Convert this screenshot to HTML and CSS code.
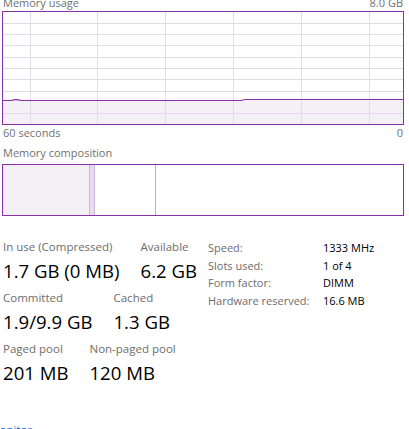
FILE: index.html
```html
<!DOCTYPE html>
<html>
<head>
<meta charset="utf-8">
<link rel="stylesheet" href="styles.css">
</head>
<body>
<div class="page">
  <div class="row-labels top">
    <span>Memory usage</span>
    <span>8.0 GB</span>
  </div>
  <div class="graph">
    <svg width="400" height="112" viewBox="0 0 400 112">
      <g stroke="#e4dbe8" stroke-width="1">
        <line x1="0" y1="11.5" x2="400" y2="11.5"/>
        <line x1="0" y1="22.5" x2="400" y2="22.5"/>
        <line x1="0" y1="33.5" x2="400" y2="33.5"/>
        <line x1="0" y1="45.5" x2="400" y2="45.5"/>
        <line x1="0" y1="56.5" x2="400" y2="56.5"/>
        <line x1="0" y1="67.5" x2="400" y2="67.5"/>
        <line x1="0" y1="79.5" x2="400" y2="79.5"/>
        <line x1="27.5" y1="0" x2="27.5" y2="112"/>
        <line x1="94.5" y1="0" x2="94.5" y2="112"/>
        <line x1="162.5" y1="0" x2="162.5" y2="112"/>
        <line x1="230.5" y1="0" x2="230.5" y2="112"/>
        <line x1="298.5" y1="0" x2="298.5" y2="112"/>
        <line x1="366.5" y1="0" x2="366.5" y2="112"/>
      </g>
      <path d="M0 88.5 L8 88.5 Q13 86.8 18 88.5 L238 88.5 Q241 87.5 244 87.5 L400 87.5 L400 112 L0 112 Z" fill="#f4f1f6"/>
      <g stroke="#e9d3ee" stroke-width="1">
        <line x1="0" y1="101.5" x2="400" y2="101.5"/>
      </g>
      <g stroke="#e4dbe8" stroke-width="1">
        <line x1="27.5" y1="89" x2="27.5" y2="112"/>
        <line x1="94.5" y1="89" x2="94.5" y2="112"/>
        <line x1="162.5" y1="89" x2="162.5" y2="112"/>
        <line x1="230.5" y1="89" x2="230.5" y2="112"/>
        <line x1="298.5" y1="89" x2="298.5" y2="112"/>
        <line x1="366.5" y1="89" x2="366.5" y2="112"/>
      </g>
      <path d="M0 88.5 L8 88.5 Q13 86.8 18 88.5 L238 88.5 Q241 87.5 244 87.5 L400 87.5" fill="none" stroke="#8b2fa8" stroke-width="1.2"/>
    </svg>
  </div>
  <div class="row-labels">
    <span>60 seconds</span>
    <span>0</span>
  </div>
  <div class="row-labels single">
    <span>Memory composition</span>
  </div>
  <div class="composition">
    <div class="seg inuse"></div>
    <div class="seg modified"></div>
    <div class="seg standby"></div>
    <div class="seg free"></div>
  </div>

  <div class="stats">
    <div class="left">
      <div class="stat-row">
        <div class="stat">
          <div class="label">In use (Compressed)</div>
          <div class="value">1.7 GB (0 MB)</div>
        </div>
        <div class="stat">
          <div class="label">Available</div>
          <div class="value">6.2 GB</div>
        </div>
      </div>
      <div class="stat-row">
        <div class="stat">
          <div class="label">Committed</div>
          <div class="value">1.9/9.9 GB</div>
        </div>
        <div class="stat">
          <div class="label">Cached</div>
          <div class="value">1.3 GB</div>
        </div>
      </div>
      <div class="stat-row">
        <div class="stat">
          <div class="label">Paged pool</div>
          <div class="value">201 MB</div>
        </div>
        <div class="stat">
          <div class="label">Non-paged pool</div>
          <div class="value">120 MB</div>
        </div>
      </div>
    </div>
    <div class="specs">
      <div class="spec-label">Speed:</div><div class="spec-value">1333 MHz</div>
      <div class="spec-label">Slots used:</div><div class="spec-value">1 of 4</div>
      <div class="spec-label">Form factor:</div><div class="spec-value">DIMM</div>
      <div class="spec-label">Hardware reserved:</div><div class="spec-value">16.6 MB</div>
    </div>
  </div>
  <div class="footer">
    <a class="link">Open Resource Monitor</a>
  </div>
</div>
</body>
</html>
```

FILE: styles.css
```css
html, body {
  margin: 0;
  padding: 0;
  background: #ffffff;
}
body {
  width: 409px;
  height: 429px;
  overflow: hidden;
  font-family: "Open Sans", "Noto Sans", sans-serif;
  color: #6d6d6d;
}
.page {
  display: flex;
  flex-direction: column;
  padding-left: 2px;
  width: 402px;
}
.row-labels {
  display: flex;
  justify-content: space-between;
  font-size: 11px;
  line-height: 16px;
  height: 16px;
  color: #717171;
  padding: 0 1px;
}
.row-labels.top {
  margin-top: -5px;
}
.row-labels.single {
  margin-top: 4px;
  margin-bottom: 3px;
}
.graph {
  border: 1px solid #8b2fa8;
  height: 112px;
  width: 400px;
}
.graph svg {
  display: block;
}
.composition {
  border: 1px solid #8b2fa8;
  height: 50px;
  width: 400px;
  display: flex;
}
.seg {
  height: 100%;
}
.inuse {
  width: 86px;
  background: #f2f0f5;
}
.modified {
  width: 4px;
  background: #eadcf0;
  border-left: 1px solid #cfb4dc;
  border-right: 1px solid #cfb4dc;
}
.standby {
  width: 60px;
  border-right: 1px solid #c2aecb;
}
.free {
  flex: 1;
}
.stats {
  display: flex;
  margin-top: 22px;
}
.left {
  width: 205px;
  display: flex;
  flex-direction: column;
}
.stat-row {
  display: flex;
  gap: 21px;
  padding-left: 1px;
  margin-bottom: 1px;
}
.label {
  font-size: 11.5px;
  line-height: 17px;
  color: #6d6d6d;
}
.value {
  font-size: 18.6px;
  line-height: 30px;
  color: #000000;
  margin-top: 1px;
  margin-bottom: 2px;
}
.specs {
  display: grid;
  grid-template-columns: 115px auto;
  grid-auto-rows: 17.5px;
  font-size: 11px;
  line-height: 17.5px;
  margin-left: 1px;
  margin-top: 1px;
}
.spec-label {
  color: #6d6d6d;
}
.spec-value {
  color: #000000;
}
.footer {
  margin-top: 30px;
  font-size: 11.5px;
  line-height: 17px;
  margin-left: -2px;
  white-space: nowrap;
}
.link {
  color: #1565c0;
  display: inline-block;
  margin-left: -96px;
}
```
